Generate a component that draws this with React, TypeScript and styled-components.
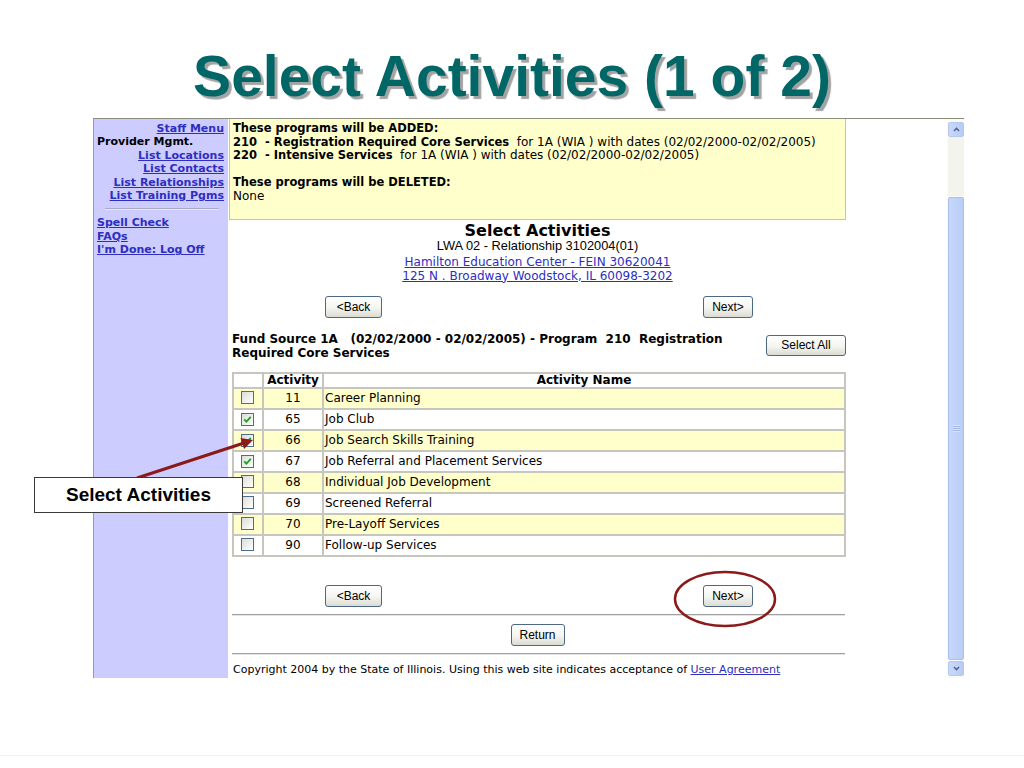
import React from "react";
import styled, { createGlobalStyle } from "styled-components";

const GlobalStyle = createGlobalStyle`
  html, body {
    margin: 0;
    padding: 0;
    background: #ffffff;
  }
  body {
    width: 1024px;
    height: 768px;
    overflow: hidden;
    font-family: "DejaVu Sans", Verdana, sans-serif;
  }
`;

const Slide = styled.div`
  position: relative;
  width: 1024px;
  height: 768px;
  display: flex;
  flex-direction: column;
`;

const Title = styled.h1`
  margin: 48px 0 14px;
  height: 56px;
  line-height: 56px;
  text-align: center;
  font-family: "Liberation Sans", Arial, sans-serif;
  font-size: 57px;
  font-weight: bold;
  color: #006666;
  text-shadow: 3px 3px 1px #a3a3a3;
`;

const Browser = styled.div`
  margin-left: 93px;
  width: 871px;
  height: 560px;
  display: flex;
  box-sizing: border-box;
  border-top: 1px solid #8c8c7c;
  border-left: 1px solid #9a9a9a;
  overflow: hidden;
`;

const Sidebar = styled.div`
  width: 134px;
  flex: 0 0 134px;
  background: #ccccff;
  box-sizing: border-box;
  padding: 3px 4px 0 3px;
  font-size: 11px;
  font-weight: bold;
  line-height: 13.4px;
`;

const NavLink = styled.a<{ $align?: "left" | "right" }>`
  display: block;
  color: #2e2ec0;
  text-decoration: underline;
  text-align: ${(p) => p.$align || "right"};
  white-space: nowrap;
`;

const NavLabel = styled.div`
  color: #000;
`;

const NavRule = styled.div`
  margin: 6px 5px 6px 8px;
  border-top: 1px solid #a9a9c9;
  border-bottom: 1px solid #e6e6ff;
`;

const Content = styled.div`
  flex: 1;
  padding-left: 1px;
  background: #ffffff;
  font-size: 12px;
  color: #000;
  overflow: hidden;
`;

const Panel = styled.div`
  width: 617px;
`;

const Notice = styled.div`
  background: #ffffcc;
  border: 1px solid #c4c4b0;
  border-top: none;
  padding: 3px 3px 15px;
  line-height: 13.6px;
  white-space: nowrap;
  b {
    font-size: 11.5px;
  }
`;

const PageHeading = styled.div`
  margin-top: 3px;
  text-align: center;
  font-size: 16px;
  font-weight: bold;
  line-height: 16px;
`;

const SubHeading = styled.div`
  text-align: center;
  font-family: "Liberation Sans", Arial, sans-serif;
  font-size: 12.8px;
  line-height: 13px;
`;

const OrgLinks = styled.div`
  margin-top: 3px;
  text-align: center;
  line-height: 14px;
  a {
    color: #2e2ec0;
    text-decoration: underline;
  }
`;

const ButtonRow = styled.div<{ $top: number }>`
  margin-top: ${(p) => p.$top}px;
  padding: 0 93px 0 96px;
  display: flex;
  justify-content: space-between;
`;

const CenterRow = styled.div<{ $top: number }>`
  margin-top: ${(p) => p.$top}px;
  display: flex;
  justify-content: center;
`;

const XPButton = styled.button<{ $width: number; $height?: number }>`
  width: ${(p) => p.$width}px;
  height: ${(p) => p.$height || 22}px;
  padding: 0;
  font-family: "Liberation Sans", Arial, sans-serif;
  font-size: 12px;
  color: #000;
  background: linear-gradient(#ffffff, #f4f4f0 55%, #dcdcd4);
  border: 1px solid #4d6884;
  border-radius: 3px;
`;

const FundRow = styled.div`
  margin-top: 14px;
  padding-left: 3px;
  display: flex;
  justify-content: space-between;
  align-items: flex-start;
`;

const FundText = styled.div`
  width: 505px;
  font-weight: bold;
  line-height: 14px;
`;

const SelectAllWrap = styled.div`
  margin-top: 3px;
`;

const ActivityTable = styled.table`
  margin: 12px 0 0 3px;
  width: 614px;
  border-collapse: collapse;
  border: 2px solid #c6c6be;
  td, th {
    border: 2px solid #c6c6be;
    padding: 0 1px;
  }
  th {
    height: 13px;
    font-weight: bold;
    line-height: 13px;
    background: #ffffff;
  }
`;

const Row = styled.tr<{ $shaded: boolean }>`
  height: 21px;
  background: ${(p) => (p.$shaded ? "#ffffcc" : "#ffffff")};
`;

const CheckCell = styled.td`
  width: 26px;
  text-align: center;
  vertical-align: middle;
`;

const NumCell = styled.td`
  width: 56px;
  text-align: center;
`;

const Box = styled.span`
  display: inline-flex;
  align-items: center;
  justify-content: center;
  width: 11px;
  height: 11px;
  margin: 1px 1px 0 0;
  border: 1px solid #4f6c8a;
  background: linear-gradient(135deg, #dcdcd6, #ffffff);
`;

const Rule = styled.div<{ $top: number }>`
  margin: ${(p) => p.$top}px 0 0 3px;
  width: 613px;
  border-top: 1px solid #a0a0a0;
  border-bottom: 1px solid #e4e4e4;
`;

const Copyright = styled.div`
  margin-top: 8px;
  padding-left: 4px;
  font-size: 11px;
  line-height: 14px;
  white-space: nowrap;
  a {
    color: #2e2ec0;
  }
`;

const Scrollbar = styled.div`
  width: 17px;
  flex: 0 0 17px;
  display: flex;
  flex-direction: column;
  padding: 3px 0 2px 1px;
  box-sizing: border-box;
  background: #fbfbf8;
`;

const ScrollButton = styled.div`
  height: 15px;
  flex: 0 0 15px;
  border: 1px solid #b4c8f0;
  border-radius: 2px;
  background: linear-gradient(90deg, #c9d9fb, #b6cbf6);
  display: flex;
  align-items: center;
  justify-content: center;
  box-sizing: border-box;
`;

const ScrollTrack = styled.div`
  height: 59px;
  flex: 0 0 59px;
  background: #f4f4ee;
`;

const ScrollThumb = styled.div`
  flex: 1;
  margin: 1px 0 1px;
  border: 1px solid #a9c0ef;
  border-radius: 2px;
  background: linear-gradient(90deg, #c6d7fb, #b9cdf7);
  display: flex;
  align-items: center;
  justify-content: center;
`;

const Grip = styled.div`
  width: 7px;
  height: 7px;
  background: repeating-linear-gradient(#d9e4fb 0 1px, #9fb6e6 1px 2px);
`;

const SlideEdge = styled.div`
  margin-top: auto;
  height: 12px;
  border-top: 1px solid #efefef;
`;

const Overlay = styled.svg`
  position: absolute;
  left: 0;
  top: 0;
  width: 1024px;
  height: 768px;
  pointer-events: none;
`;

const Callout = styled.div`
  position: absolute;
  left: 34px;
  top: 477px;
  width: 209px;
  height: 36px;
  box-sizing: border-box;
  border: 1px solid #3a3a3a;
  background: #ffffff;
  display: flex;
  align-items: center;
  justify-content: center;
  font-family: "Liberation Sans", Arial, sans-serif;
  font-size: 19px;
  font-weight: bold;
  color: #000;
`;

const activities = [
  { id: "11", name: "Career Planning", checked: false },
  { id: "65", name: "Job Club", checked: true },
  { id: "66", name: "Job Search Skills Training", checked: true },
  { id: "67", name: "Job Referral and Placement Services", checked: true },
  { id: "68", name: "Individual Job Development", checked: false },
  { id: "69", name: "Screened Referral", checked: false },
  { id: "70", name: "Pre-Layoff Services", checked: false },
  { id: "90", name: "Follow-up Services", checked: false },
];

const CheckBox = ({ checked }: { checked: boolean }) => (
  <Box>
    {checked && (
      <svg width="9" height="9" viewBox="0 0 9 9">
        <path d="M1.2 4.3 L3.4 6.6 L7.8 1.8" fill="none" stroke="#22a022" strokeWidth="1.8" />
      </svg>
    )}
  </Box>
);

const Chevron = ({ up }: { up: boolean }) => (
  <svg width="7" height="5" viewBox="0 0 7 5">
    <path d={up ? "M1 4 L3.5 1.3 L6 4" : "M1 1 L3.5 3.7 L6 1"} fill="none" stroke="#4d6185" strokeWidth="1.5" />
  </svg>
);

const App = (): JSX.Element => {
  return (
    <Slide>
      <GlobalStyle />
      <Title>Select Activities (1 of 2)</Title>
      <Browser>
        <Sidebar>
          <NavLink href="#">Staff Menu</NavLink>
          <NavLabel>Provider Mgmt.</NavLabel>
          <NavLink href="#">List Locations</NavLink>
          <NavLink href="#">List Contacts</NavLink>
          <NavLink href="#">List Relationships</NavLink>
          <NavLink href="#">List Training Pgms</NavLink>
          <NavRule />
          <NavLink href="#" $align="left">Spell Check</NavLink>
          <NavLink href="#" $align="left">FAQs</NavLink>
          <NavLink href="#" $align="left">I'm Done: Log Off</NavLink>
        </Sidebar>
        <Content>
          <Panel>
            <Notice>
              <b>These programs will be ADDED:</b>
              <br />
              <b>210&nbsp; - Registration Required Core Services</b>&nbsp; for 1A (WIA ) with dates (02/02/2000-02/02/2005)
              <br />
              <b>220&nbsp; - Intensive Services</b>&nbsp; for 1A (WIA ) with dates (02/02/2000-02/02/2005)
              <br />
              <br />
              <b>These programs will be DELETED:</b>
              <br />
              None
            </Notice>
            <PageHeading>Select Activities</PageHeading>
            <SubHeading>LWA 02 - Relationship 3102004(01)</SubHeading>
            <OrgLinks>
              <a href="#">Hamilton Education Center - FEIN 30620041</a>
              <br />
              <a href="#">125 N . Broadway Woodstock, IL 60098-3202</a>
            </OrgLinks>
            <ButtonRow $top={13}>
              <XPButton $width={57}>&lt;Back</XPButton>
              <XPButton $width={50}>Next&gt;</XPButton>
            </ButtonRow>
            <FundRow>
              <FundText>
                Fund Source 1A&nbsp;&nbsp; (02/02/2000 - 02/02/2005) - Program&nbsp; 210&nbsp; Registration Required Core Services
              </FundText>
              <SelectAllWrap>
                <XPButton $width={80} $height={21}>Select All</XPButton>
              </SelectAllWrap>
            </FundRow>
            <ActivityTable>
              <thead>
                <tr>
                  <th />
                  <th>Activity</th>
                  <th>Activity Name</th>
                </tr>
              </thead>
              <tbody>
                {activities.map((a, i) => (
                  <Row key={a.id} $shaded={i % 2 === 0}>
                    <CheckCell>
                      <CheckBox checked={a.checked} />
                    </CheckCell>
                    <NumCell>{a.id}</NumCell>
                    <td>{a.name}</td>
                  </Row>
                ))}
              </tbody>
            </ActivityTable>
            <ButtonRow $top={28}>
              <XPButton $width={57}>&lt;Back</XPButton>
              <XPButton $width={50}>Next&gt;</XPButton>
            </ButtonRow>
            <Rule $top={7} />
            <CenterRow $top={8}>
              <XPButton $width={54} $height={22}>Return</XPButton>
            </CenterRow>
            <Rule $top={7} />
            <Copyright>
              Copyright 2004 by the State of Illinois. Using this web site indicates acceptance of <a href="#">User Agreement</a>
            </Copyright>
          </Panel>
        </Content>
        <Scrollbar>
          <ScrollButton>
            <Chevron up />
          </ScrollButton>
          <ScrollTrack />
          <ScrollThumb>
            <Grip />
          </ScrollThumb>
          <ScrollButton>
            <Chevron up={false} />
          </ScrollButton>
        </Scrollbar>
      </Browser>
      <SlideEdge />
      <Overlay viewBox="0 0 1024 768">
        <line x1="137" y1="478" x2="244" y2="443" stroke="#8b1a1a" strokeWidth="3" />
        <polygon points="253,440 244,449 240.5,438" fill="#8b1a1a" />
        <ellipse cx="725" cy="599" rx="50" ry="27" fill="none" stroke="#8b1a1a" strokeWidth="2.5" />
      </Overlay>
      <Callout>Select Activities</Callout>
    </Slide>
  );
};

export default App;
